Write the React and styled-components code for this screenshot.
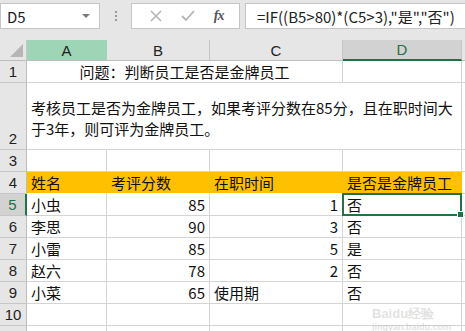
import React from 'react';
import styled, { createGlobalStyle, css } from 'styled-components';

const GlobalStyle = createGlobalStyle`
  html, body {
    margin: 0;
    padding: 0;
    background: #ffffff;
    overflow: hidden;
  }
  body {
    font-family: "Noto Sans CJK SC", "Noto Sans", sans-serif;
  }
`;

const Page = styled.div`
  width: 465px;
  height: 331px;
  position: relative;
  overflow: hidden;
  background: #ffffff;
`;

const Toolbar = styled.div`
  display: flex;
  align-items: flex-start;
  height: 40px;
  padding-top: 3px;
  box-sizing: border-box;
  background: #e6e6e6;
`;

const Box = styled.div`
  height: 26px;
  box-sizing: border-box;
  background: #ffffff;
  border: 1px solid #c6c6c6;
  display: flex;
  align-items: center;
`;

const NameBox = styled(Box)`
  width: 100px;
  padding: 0 6px;
  justify-content: space-between;
  font-size: 15px;
  color: #222;
`;

const Caret = styled.span`
  width: 0;
  height: 0;
  border-left: 4px solid transparent;
  border-right: 4px solid transparent;
  border-top: 4px solid #7a7a7a;
  margin-right: 3px;
`;

const Grip = styled.div`
  width: 31px;
  height: 26px;
  display: flex;
  flex-direction: column;
  align-items: center;
  justify-content: center;
  gap: 2px;

  span {
    width: 2px;
    height: 2px;
    background: #9a9a9a;
  }
`;

const ButtonBox = styled(Box)`
  width: 109px;
  margin-right: 5px;
  justify-content: space-around;
  padding: 0 6px 0 8px;
`;

const FxLabel = styled.span`
  font-family: "Liberation Serif", serif;
  font-style: italic;
  font-weight: bold;
  font-size: 14px;
  color: #555;
  letter-spacing: -1px;
`;

const FormulaBox = styled(Box)`
  flex: 1;
  border-right: none;
  padding-left: 11px;
  font-size: 15px;
  color: #222;
  white-space: nowrap;
`;

const Sheet = styled.div`
  display: grid;
  grid-template-columns: 27px 80px 103px 133px 119px 1fr;
  grid-template-rows: 21px 22px 67px 22px 22px 22px 22px 22px 22px 22px 22px 22px;
  font-size: 15px;
  color: #111;
`;

const Corner = styled.div`
  background: #e6e6e6;
  border-right: 1px solid #c6c6c6;
  border-bottom: 1px solid #bdbdbd;
  position: relative;

  &::after {
    content: '';
    position: absolute;
    right: 3px;
    bottom: 3px;
    width: 0;
    height: 0;
    border-left: 13px solid transparent;
    border-bottom: 13px solid #b6b6b6;
  }
`;

const ColHead = styled.div`
  box-sizing: border-box;
  display: flex;
  align-items: center;
  justify-content: center;
  font-family: "Liberation Sans", sans-serif;
  font-size: 15px;
  color: #222;
  background: #e6e6e6;
  border-right: 1px solid #c6c6c6;
  border-bottom: 1px solid #bdbdbd;
  ${p => p.$tone === 'green' && css`
    background: #9fd5b7;
    border-right-color: #9fd5b7;
  `}
  ${p => p.$tone === 'active' && css`
    background: #d2d2d2;
    color: #217346;
    border-bottom: 2px solid #217346;
  `}
`;

const RowHead = styled.div`
  box-sizing: border-box;
  display: flex;
  align-items: ${p => (p.$tall ? 'flex-end' : 'center')};
  justify-content: center;
  padding-bottom: ${p => (p.$tall ? '2px' : '0')};
  font-family: "Liberation Sans", sans-serif;
  font-size: 15px;
  color: #222;
  background: #e6e6e6;
  border-right: 1px solid #bdbdbd;
  border-bottom: 1px solid #c6c6c6;
  ${p => p.$active && css`
    background: #d2d2d2;
    color: #217346;
    border-right: 2px solid #217346;
  `}
`;

const Cell = styled.div`
  box-sizing: border-box;
  display: flex;
  align-items: ${p => (p.$top ? 'flex-start' : 'center')};
  justify-content: ${p =>
    p.$align === 'right' ? 'flex-end' : p.$align === 'center' ? 'center' : 'flex-start'};
  padding: 0 4px;
  white-space: nowrap;
  line-height: 21px;
  border-right: 1px solid #d4d4d4;
  border-bottom: 1px solid #d4d4d4;
  grid-column: span ${p => p.$span || 1};
  position: relative;
  background: ${p => (p.$fill ? '#ffc000' : '#ffffff')};
  ${p => p.$fill && css`
    border-right-color: #ffc000;
    border-bottom-color: #ffffff;
  `}
  ${p => p.$selected && css`
    &::after {
      content: '';
      position: absolute;
      left: -1px;
      top: -1px;
      right: -1px;
      bottom: -1px;
      border: 2px solid #217346;
    }
    &::before {
      content: '';
      position: absolute;
      right: -3px;
      bottom: -3px;
      width: 5px;
      height: 5px;
      background: #217346;
      border: 1px solid #ffffff;
      z-index: 1;
    }
  `}
`;

const Para = styled.div`
  white-space: normal;
  line-height: 21px;
  padding-top: 14px;
  width: 430px;
`;

const Watermark = styled.div`
  position: absolute;
  left: 372px;
  top: 305px;
  color: rgba(180, 180, 180, 0.4);
  font-family: "Liberation Sans", sans-serif;
  font-weight: bold;
  line-height: 1;
  pointer-events: none;

  b {
    font-size: 13px;
  }
  small {
    display: block;
    font-size: 9px;
    margin-top: 2px;
  }
`;

const rows = [
  ['小虫', '85', '1', '否'],
  ['李思', '90', '3', '否'],
  ['小雷', '85', '5', '是'],
  ['赵六', '78', '2', '否'],
  ['小菜', '65', '使用期', '否'],
];

export default function App() {
  return (
    <Page>
      <GlobalStyle />
      <Toolbar>
        <NameBox>
          D5
          <Caret />
        </NameBox>
        <Grip>
          <span />
          <span />
          <span />
        </Grip>
        <ButtonBox>
          <svg width="12" height="12" viewBox="0 0 12 12">
            <path d="M1 1 L11 11 M11 1 L1 11" stroke="#b5b5b5" strokeWidth="1.6" />
          </svg>
          <svg width="14" height="12" viewBox="0 0 14 12">
            <path d="M1 6 L5 10 L13 1" stroke="#b5b5b5" strokeWidth="1.8" fill="none" />
          </svg>
          <FxLabel>fx</FxLabel>
        </ButtonBox>
        <FormulaBox>=IF((B5&gt;80)*(C5&gt;3),"是","否")</FormulaBox>
      </Toolbar>
      <Sheet>
        <Corner />
        <ColHead $tone="green">A</ColHead>
        <ColHead>B</ColHead>
        <ColHead>C</ColHead>
        <ColHead $tone="active">D</ColHead>
        <ColHead />

        <RowHead>1</RowHead>
        <Cell $span={3} $align="center">问题：判断员工是否是金牌员工</Cell>
        <Cell />
        <Cell />

        <RowHead $tall>2</RowHead>
        <Cell $span={4} $top>
          <Para>考核员工是否为金牌员工，如果考评分数在85分，且在职时间大于3年，则可评为金牌员工。</Para>
        </Cell>
        <Cell />

        <RowHead>3</RowHead>
        <Cell />
        <Cell />
        <Cell />
        <Cell />
        <Cell />

        <RowHead>4</RowHead>
        <Cell $fill>姓名</Cell>
        <Cell $fill>考评分数</Cell>
        <Cell $fill>在职时间</Cell>
        <Cell $fill>是否是金牌员工</Cell>
        <Cell />

        {rows.map((r, i) => (
          <React.Fragment key={r[0]}>
            <RowHead $active={i === 0}>{i + 5}</RowHead>
            <Cell>{r[0]}</Cell>
            <Cell $align="right">{r[1]}</Cell>
            <Cell $align={/^\d+$/.test(r[2]) ? 'right' : 'left'}>{r[2]}</Cell>
            <Cell $selected={i === 0}>{r[3]}</Cell>
            <Cell />
          </React.Fragment>
        ))}

        <RowHead>10</RowHead>
        <Cell />
        <Cell />
        <Cell />
        <Cell />
        <Cell />

        <RowHead />
        <Cell />
        <Cell />
        <Cell />
        <Cell />
        <Cell />
      </Sheet>
      <Watermark>
        <b>Baidu经验</b>
        <small>jingyan.baidu.com</small>
      </Watermark>
    </Page>
  );
}
